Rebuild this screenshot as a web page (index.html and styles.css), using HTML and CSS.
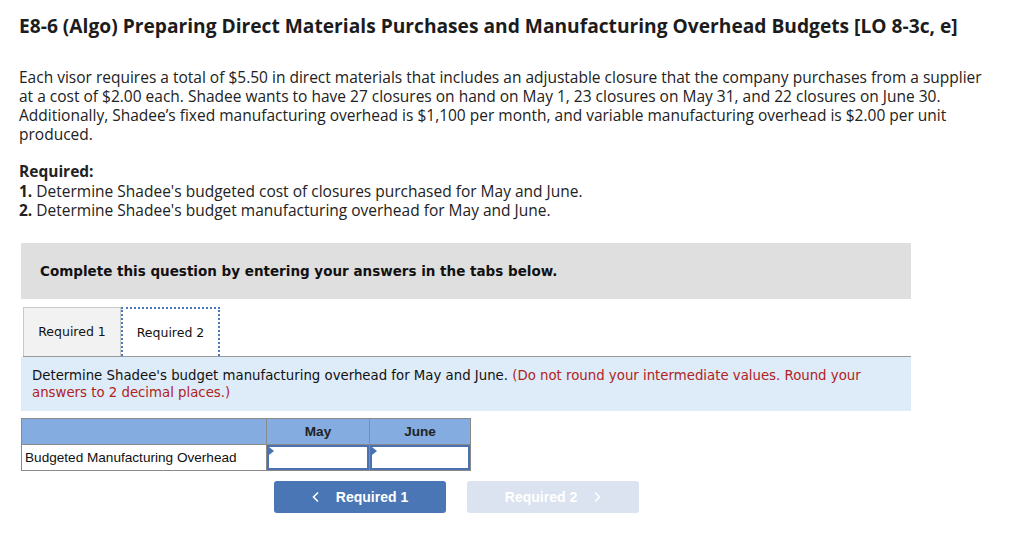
FILE: index.html
```html
<!DOCTYPE html>
<html>
<head>
<meta charset="utf-8">
<link rel="stylesheet" href="styles.css">
</head>
<body>
<div class="page">
  <h1 class="title">E8-6 (Algo) Preparing Direct Materials Purchases and Manufacturing Overhead Budgets [LO 8-3c, e]</h1>
  <p class="para">Each visor requires a total of $5.50 in direct materials that includes an adjustable closure that the company purchases from a supplier at a cost of $2.00 each. Shadee wants to have 27 closures on hand on May 1, 23 closures on May 31, and 22 closures on June 30. Additionally, Shadee’s fixed manufacturing overhead is $1,100 per month, and variable manufacturing overhead is $2.00 per unit produced.</p>
  <div class="req">
    <div class="req-head">Required:</div>
    <div><b>1.</b> Determine Shadee's budgeted cost of closures purchased for May and June.</div>
    <div><b>2.</b> Determine Shadee's budget manufacturing overhead for May and June.</div>
  </div>
  <div class="complete">Complete this question by entering your answers in the tabs below.</div>
  <div class="tabs">
    <div class="tab">Required 1</div>
    <div class="tab active">Required 2</div>
  </div>
  <div class="instr">Determine Shadee's budget manufacturing overhead for May and June. <span class="red">(Do not round your intermediate values. Round your answers to 2 decimal places.)</span></div>
  <table class="grid">
    <colgroup><col class="c1"><col class="c2"><col class="c3"></colgroup>
    <tr class="hrow"><th></th><th>May</th><th>June</th></tr>
    <tr><td class="label">Budgeted Manufacturing Overhead</td><td class="inp"><div class="box"><span class="flag"></span></div></td><td class="inp"><div class="box"><span class="flag"></span></div></td></tr>
  </table>
  <div class="navs">
    <div class="btn prev"><svg class="chev" width="8" height="12" viewBox="0 0 8 12"><polyline points="6,1.5 1.5,6 6,10.5" fill="none" stroke="#fff" stroke-width="1.6"/></svg>Required 1</div>
    <div class="btn next">Required 2<svg class="chev r" width="8" height="12" viewBox="0 0 8 12"><polyline points="2,1.5 6.5,6 2,10.5" fill="none" stroke="#fff" stroke-width="1.6"/></svg></div>
  </div>
</div>
</body>
</html>
```
FILE: styles.css
```css
html, body { margin: 0; padding: 0; background: #fff; }
.page { padding: 14px 0 0 19px; width: 978px; font-family: "Open Sans", sans-serif; color: #222; }
.title { margin: 0; font-size: 19.2px; font-weight: 700; line-height: 24px; color: #1c1c1c; }
.para { margin: 30px 0 0; font-size: 15.5px; line-height: 19px; }
.req { margin-top: 18px; font-size: 15.5px; line-height: 19.5px; }
.req-head { font-weight: 700; }
.complete { margin: 22px 0 0 2px; width: 871px; height: 56px; background: #dfdfdf; padding-left: 19px; font-family: "DejaVu Sans", Verdana, sans-serif; font-weight: 700; font-size: 13.5px; line-height: 56px; color: #111; }
.tabs { display: flex; margin: 8px 0 0 4px; width: 888px; border-bottom: 1px solid #999; height: 49px; }
.tab { width: 96px; height: 48px; border: 1px solid #c8c8c8; border-bottom: none; background: #f2f2f2; font-family: "DejaVu Sans", Verdana, sans-serif; font-size: 12.5px; color: #111; display: flex; align-items: center; justify-content: center; }
.tab.active { background: #fff; border: 2px dotted #4a78c0; border-bottom: none; width: 95px; height: 47px; }
.instr { margin-left: 2px; width: 879px; padding: 10px 0 10px 11px; background: #deebf8; font-family: "DejaVu Sans", Verdana, sans-serif; font-size: 13.3px; line-height: 17px; color: #111; }
.red { color: #b02323; }
.grid { margin: 7px 0 0 2px; border-collapse: collapse; table-layout: fixed; width: 449px; font-family: "Liberation Sans", Arial, sans-serif; font-size: 13.6px; }
.grid th, .grid td { border: 1px solid #8a8a8a; padding: 0; height: 25px; }
.c1 { width: 245px; }
.c2 { width: 103px; }
.c3 { width: 101px; }
.hrow th { background: #84ace0; font-weight: 700; color: #222; }
.label { padding-left: 3px !important; text-align: left; color: #111; }
.box { position: relative; height: 21px; border: 2px solid #4a72b0; background: #fff; }
.flag { position: absolute; left: 0; top: 0; width: 0; height: 0; border-top: 4px solid transparent; border-bottom: 4px solid transparent; border-left: 5px solid #4a72b0; }
.navs { display: flex; gap: 21px; margin: 10px 0 0 255px; }
.btn { width: 172px; height: 32px; border-radius: 3px; display: flex; align-items: center; justify-content: center; font-family: "Liberation Sans", Arial, sans-serif; font-weight: 700; font-size: 14px; color: #fff; }
.prev { background: #4a76b6; }
.next { background: #dae3ef; }
.chev { margin-right: 16px; }
.chev.r { margin: 0 0 0 16px; }
```
